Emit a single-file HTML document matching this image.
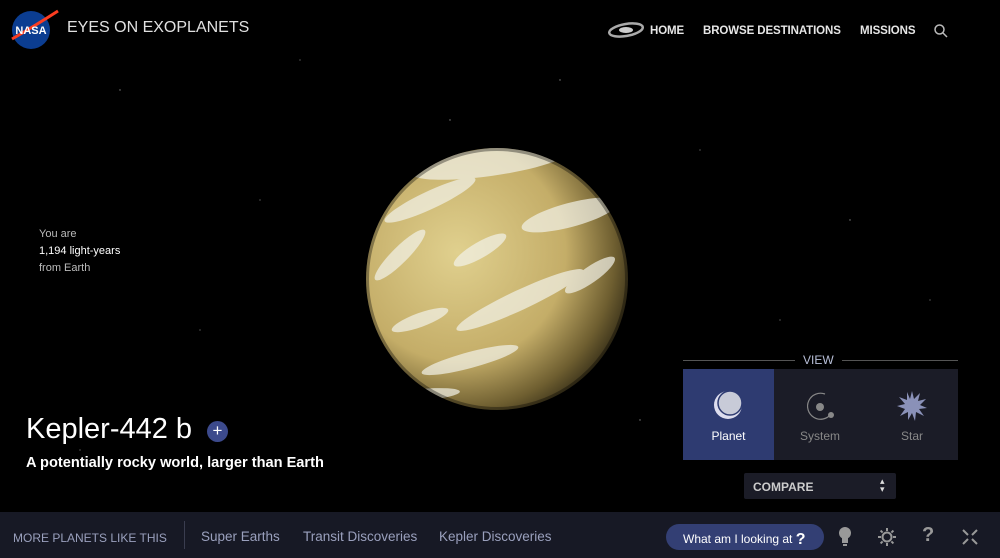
<!DOCTYPE html>
<html><head><meta charset="utf-8"><style>
body{margin:0;width:1000px;height:558px;background:#000;overflow:hidden;position:relative;font-family:"Liberation Sans",sans-serif;color:#ddd}
.a{position:absolute}
.nav{top:25px;font-size:11.5px;font-weight:bold;color:#e6e6e6;letter-spacing:-.1px}
.bb{left:0;top:512px;width:1000px;height:46px;background:#171925}
.bl{top:529px;font-size:13.5px;color:#9aa0bd}
</style></head><body>
<svg class="a" style="left:0;top:0" width="1000" height="558">
<g fill="#fff" opacity=".5">
<circle cx="120" cy="90" r=".7"/><circle cx="300" cy="60" r=".6"/><circle cx="450" cy="120" r=".7"/><circle cx="700" cy="150" r=".6"/><circle cx="850" cy="220" r=".7"/><circle cx="200" cy="330" r=".6"/><circle cx="640" cy="420" r=".7"/><circle cx="930" cy="300" r=".6"/><circle cx="80" cy="450" r=".6"/><circle cx="560" cy="80" r=".7"/><circle cx="260" cy="200" r=".6"/><circle cx="780" cy="320" r=".6"/>
</g>
<defs>
<radialGradient id="p" cx="0.35" cy="0.4" r="0.75"><stop offset="0" stop-color="#e0d08e"/><stop offset=".55" stop-color="#c4ad68"/><stop offset=".8" stop-color="#6e5e30"/><stop offset="1" stop-color="#15120a"/></radialGradient>
<clipPath id="c"><circle cx="497" cy="279" r="131"/></clipPath>
</defs>
<circle cx="497" cy="279" r="131" fill="url(#p)"/>
<g clip-path="url(#c)" fill="#f2f2ea" opacity=".7">
<ellipse cx="490" cy="162" rx="80" ry="14" transform="rotate(-8 490 162)"/>
<ellipse cx="430" cy="200" rx="50" ry="9" transform="rotate(-25 430 200)"/>
<ellipse cx="570" cy="215" rx="50" ry="12" transform="rotate(-15 570 215)"/>
<ellipse cx="400" cy="255" rx="35" ry="8" transform="rotate(-45 400 255)"/>
<ellipse cx="480" cy="250" rx="30" ry="8" transform="rotate(-30 480 250)"/>
<ellipse cx="520" cy="300" rx="70" ry="10" transform="rotate(-25 520 300)"/>
<ellipse cx="420" cy="320" rx="30" ry="7" transform="rotate(-20 420 320)"/>
<ellipse cx="590" cy="275" rx="30" ry="8" transform="rotate(-35 590 275)"/>
<ellipse cx="470" cy="360" rx="50" ry="8" transform="rotate(-15 470 360)"/>
<ellipse cx="420" cy="395" rx="40" ry="6" transform="rotate(-5 420 395)"/>
</g>
<circle cx="497" cy="279" r="131" fill="none" stroke="#000" stroke-opacity=".35" stroke-width="6"/>
</svg>
<svg class="a" style="left:8px;top:9px" width="52" height="42"><circle cx="23" cy="21" r="19" fill="#0b3d91"/><path d="M4 30 Q25 18 50 2" stroke="#fc3d21" stroke-width="3" fill="none"/><text x="23" y="25" fill="#fff" font-size="11" font-weight="bold" text-anchor="middle" font-family="Liberation Sans">NASA</text></svg>
<div class="a" style="left:67px;top:19px;font-size:16px;color:#e0e0e0">EYES ON EXOPLANETS</div>
<svg class="a" style="left:607px;top:21px" width="38" height="18"><ellipse cx="19" cy="9" rx="17" ry="6" fill="none" stroke="#aaa" stroke-width="2.5" transform="rotate(-10 19 9)"/><ellipse cx="19" cy="9" rx="7" ry="3" fill="#ccc"/></svg>
<div class="a nav" style="left:650px">HOME</div>
<div class="a nav" style="left:703px">BROWSE DESTINATIONS</div>
<div class="a nav" style="left:860px">MISSIONS</div>
<svg class="a" style="left:933px;top:23px" width="16" height="16"><circle cx="6.5" cy="6.5" r="4.5" fill="none" stroke="#bbb" stroke-width="1.5"/><path d="M10 10l4 4" stroke="#bbb" stroke-width="1.5"/></svg>
<div class="a" style="left:39px;top:226px;font-size:11px;line-height:17px;color:#bbb">You are<br><span style="color:#fff">1,194 light-years</span><br>from Earth</div>
<div class="a" style="left:26px;top:413px;font-size:29px;color:#fff">Kepler-442 b</div>
<div class="a" style="left:207px;top:421px;width:21px;height:21px;border-radius:50%;background:#3c4a8c;color:#fff;text-align:center;line-height:20px;font-size:17px">+</div>
<div class="a" style="left:26px;top:455px;font-size:14.6px;font-weight:bold;color:#fff">A potentially rocky world, larger than Earth</div>
<div class="a" style="left:683px;top:360px;width:275px;border-top:1px solid #555"></div>
<div class="a" style="left:795px;top:353px;padding:0 8px;background:#000;font-size:12px;color:#b8bfd8">VIEW</div>
<div class="a" style="left:683px;top:369px;width:275px;height:91px;background:#1b1c27"></div>
<div class="a" style="left:683px;top:369px;width:91px;height:91px;background:#2e3b71"></div>
<svg class="a" style="left:712px;top:390px" width="32" height="32"><circle cx="16" cy="15" r="14" fill="#dde"/><circle cx="18" cy="13" r="12" fill="#c8cbd8" stroke="#2e3b71" stroke-width="1.5"/></svg>
<svg class="a" style="left:803px;top:390px" width="34" height="34"><path d="M22 4 A13 13 0 1 0 28 24" fill="none" stroke="#888" stroke-width="1.2"/><circle cx="17" cy="17" r="4" fill="#888"/><circle cx="28" cy="25" r="3" fill="#888"/></svg>
<svg class="a" style="left:896px;top:390px" width="32" height="32"><polygon fill="#8a91b8" points="16,1 18,9 24,3 22,11 30,9 24,15 31,18 23,19 28,26 20,22 19,31 16,23 12,30 12,22 4,26 9,19 1,16 9,14 3,7 11,10 11,2 14,9"/></svg>
<div class="a" style="left:683px;top:429px;width:91px;text-align:center;font-size:12px;color:#fff">Planet</div>
<div class="a" style="left:774px;top:429px;width:92px;text-align:center;font-size:12px;color:#888">System</div>
<div class="a" style="left:866px;top:429px;width:92px;text-align:center;font-size:12px;color:#888">Star</div>
<div class="a" style="left:744px;top:473px;width:152px;height:26px;background:#1b1c27;border-radius:2px"></div>
<div class="a" style="left:753px;top:480px;font-size:12px;font-weight:bold;color:#ccc">COMPARE</div>
<div class="a" style="left:880px;top:477px;font-size:9px;color:#ddd;line-height:8px">▴<br>▾</div>
<div class="a bb"></div>
<div class="a" style="left:184px;top:521px;width:1px;height:28px;background:#3a3d4f"></div>
<div class="a bl" style="left:13px;font-size:12px;top:531px">MORE PLANETS LIKE THIS</div>
<div class="a bl" style="left:201px">Super Earths</div>
<div class="a bl" style="left:303px">Transit Discoveries</div>
<div class="a bl" style="left:439px">Kepler Discoveries</div>
<div class="a" style="left:666px;top:524px;width:158px;height:26px;border-radius:13px;background:#333f74"></div>
<div class="a" style="left:683px;top:530px;font-size:12px;color:#fff">What am I looking at <b style="font-size:16px;position:relative;top:1px">?</b></div>
<svg class="a" style="left:837px;top:526px" width="18" height="22"><circle cx="8" cy="7" r="6" fill="#999"/><rect x="5" y="12" width="6" height="5" fill="#999"/><rect x="6" y="18" width="4" height="2" fill="#999"/></svg>
<svg class="a" style="left:877px;top:527px" width="20" height="20" stroke="#999" stroke-width="2" fill="none"><circle cx="10" cy="10" r="4.5"/><path d="M10 1v3M10 16v3M1 10h3M16 10h3M3.6 3.6l2 2M14.4 14.4l2 2M3.6 16.4l2-2M14.4 5.6l2-2"/></svg>
<div class="a" style="left:922px;top:524px;font-size:20px;font-weight:bold;color:#999">?</div>
<svg class="a" style="left:961px;top:528px" width="18" height="18" stroke="#999" stroke-width="2"><path d="M2 2l5 5M16 2l-5 5M2 16l5-5M16 16l-5-5"/></svg>
</body></html>
